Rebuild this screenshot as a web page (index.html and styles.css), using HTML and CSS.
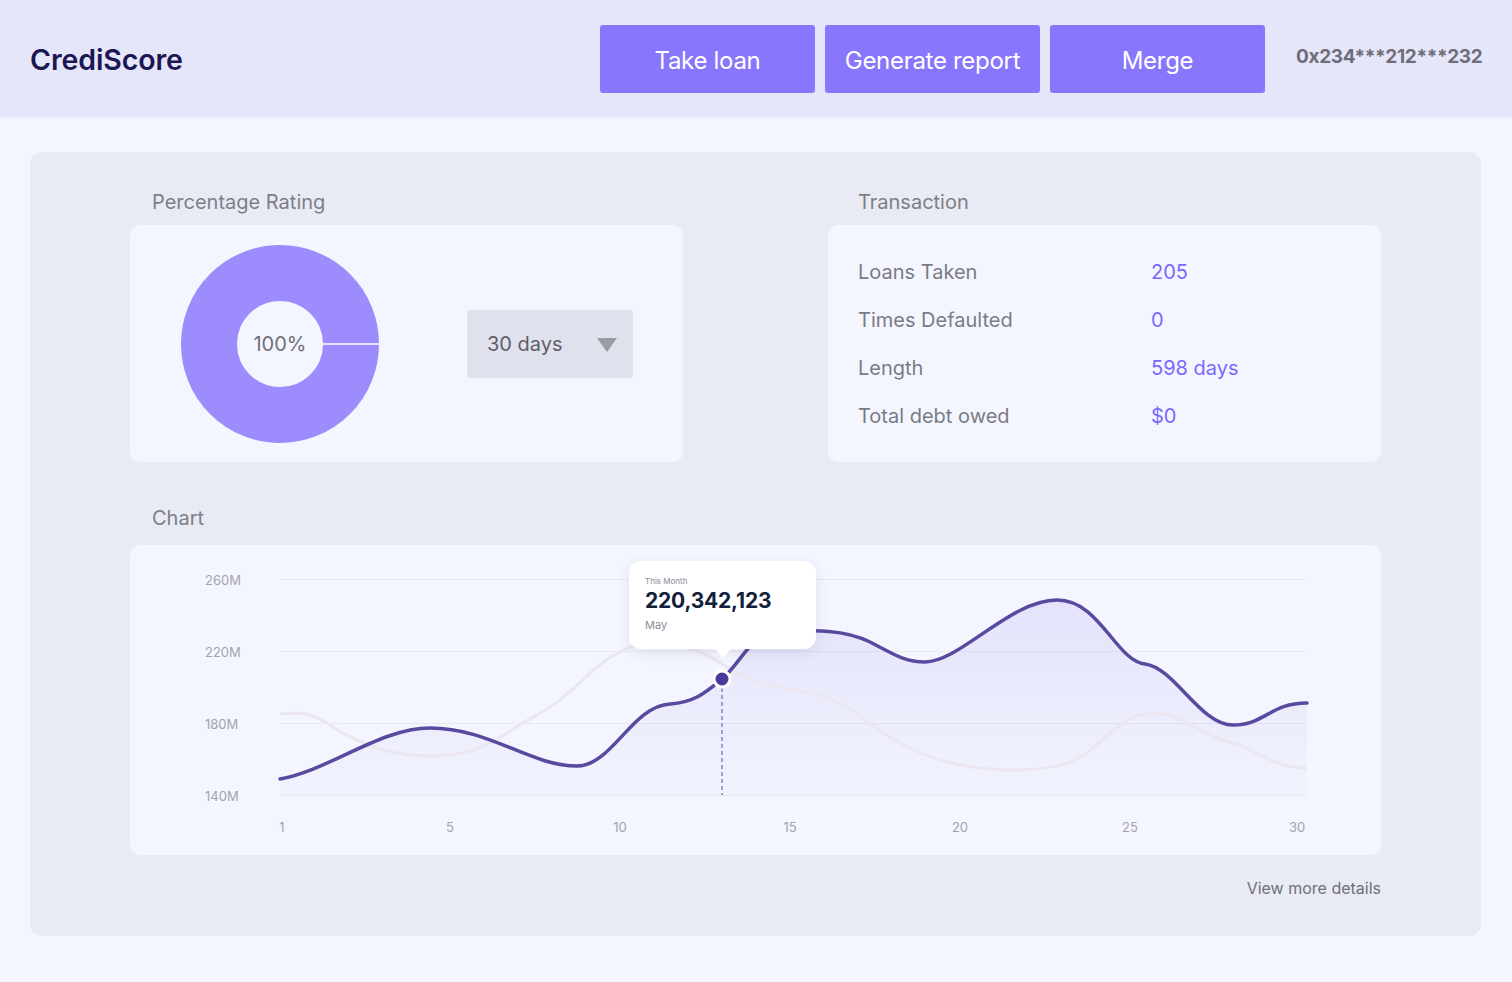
FILE: index.html
```html
<!DOCTYPE html>
<html lang="en">
<head>
<meta charset="utf-8">
<title>CrediScore</title>
<link rel="stylesheet" href="styles.css">
</head>
<body>
<header class="topbar">
  <div class="logo">CrediScore</div>
  <nav class="actions">
    <button class="btn">Take loan</button>
    <button class="btn">Generate report</button>
    <button class="btn">Merge</button>
  </nav>
  <div class="address">0x234***212***232</div>
</header>

<main class="page">
  <section class="panel">
    <div class="top-row">
      <div class="block">
        <h2 class="label">Percentage Rating</h2>
        <div class="card rating-card">
          <svg class="donut" width="198" height="198" viewBox="0 0 198 198">
            <circle cx="99" cy="99" r="71" fill="none" stroke="#9d8cfd" stroke-width="56"/>
            <line x1="142" y1="99" x2="199" y2="99" stroke="#ffffff" stroke-width="1.5"/>
            <text x="99" y="106" text-anchor="middle" class="donut-text">100%</text>
          </svg>
          <div class="select">
            <span>30 days</span>
            <svg width="20" height="14" viewBox="0 0 20 14"><polygon points="0,0 20,0 10,14" fill="#9c9ca5"/></svg>
          </div>
        </div>
      </div>
      <div class="block">
        <h2 class="label label-tx">Transaction</h2>
        <div class="card tx-card">
          <div class="tx-row"><span class="tx-key">Loans Taken</span><span class="tx-val">205</span></div>
          <div class="tx-row"><span class="tx-key">Times Defaulted</span><span class="tx-val">0</span></div>
          <div class="tx-row"><span class="tx-key">Length</span><span class="tx-val">598 days</span></div>
          <div class="tx-row"><span class="tx-key">Total debt owed</span><span class="tx-val">$0</span></div>
        </div>
      </div>
    </div>

    <h2 class="label chart-label">Chart</h2>
    <div class="card chart-card">
      <svg class="chart" width="1251" height="310" viewBox="130 545 1251 310">
        <defs>
          <linearGradient id="fillGrad" gradientUnits="userSpaceOnUse" x1="0" y1="600" x2="0" y2="795">
            <stop offset="0" stop-color="#7b64e6" stop-opacity="0.13"/>
            <stop offset="1" stop-color="#7b64e6" stop-opacity="0.02"/>
          </linearGradient>
        </defs>
        <g stroke="#e9e9f1" stroke-width="1">
          <line x1="280" y1="579.5" x2="1307" y2="579.5"/>
          <line x1="280" y1="651.5" x2="1307" y2="651.5"/>
          <line x1="280" y1="723.5" x2="1307" y2="723.5"/>
          <line x1="280" y1="795.5" x2="1307" y2="795.5"/>
        </g>
        <g class="axis-y">
          <text x="205" y="585">260M</text>
          <text x="205" y="657">220M</text>
          <text x="205" y="729">180M</text>
          <text x="205" y="801">140M</text>
        </g>
        <g class="axis-x" text-anchor="middle">
          <text x="282" y="832">1</text>
          <text x="450" y="832">5</text>
          <text x="620" y="832">10</text>
          <text x="790" y="832">15</text>
          <text x="960" y="832">20</text>
          <text x="1130" y="832">25</text>
          <text x="1297" y="832">30</text>
        </g>
        <path fill="url(#fillGrad)" d="M280,779 C330,770 380,728 430,728 C490,728 530,766 577,766 C612,766 632,706 670,704 C695,702 705,693 722,679 C740,664 752,633 775,632 C805,631 840,627 870,642 C895,655 905,662 925,662 C960,662 1010,600 1057,600 C1100,600 1115,660 1145,664 C1175,668 1200,725 1233,725 C1265,725 1270,703 1307,703 L1307,795 L280,795 Z"/>
        <path fill="none" stroke="#ebe6ef" stroke-width="3" d="M280,714 C300,712 310,712 330,725 C360,745 395,756 430,756 C465,756 485,748 515,728 C535,715 545,712 560,700 C590,675 610,650 640,645 C660,642 680,645 700,652 C720,660 740,680 780,687 C810,692 830,695 855,712 C890,740 930,768 1007,770 C1040,770 1065,768 1087,753 C1110,735 1125,713 1153,713 C1180,713 1200,735 1233,743 C1260,752 1275,768 1307,768"/>
        <path fill="none" stroke="#5a4a9f" stroke-width="3.5" stroke-linecap="round" d="M280,779 C330,770 380,728 430,728 C490,728 530,766 577,766 C612,766 632,706 670,704 C695,702 705,693 722,679 C740,664 752,633 775,632 C805,631 840,627 870,642 C895,655 905,662 925,662 C960,662 1010,600 1057,600 C1100,600 1115,660 1145,664 C1175,668 1200,725 1233,725 C1265,725 1270,703 1307,703"/>
        <line x1="722" y1="688" x2="722" y2="795" stroke="#5b4aa8" stroke-width="1" stroke-dasharray="4 3"/>
        <circle cx="722" cy="679" r="8" fill="#4b3a99" stroke="#ffffff" stroke-width="3"/>
      </svg>
      <div class="tooltip">
        <div class="tt-title">This Month</div>
        <div class="tt-value">220,342,123</div>
        <div class="tt-sub">May</div>
      </div>
    </div>
    <div class="more-row"><a class="more">View more details</a></div>
  </section>
</main>
</body>
</html>
```

FILE: styles.css
```css
* { box-sizing: border-box; }
html, body { margin: 0; padding: 0; }
body {
  background: #f3f6fe;
  font-family: Inter, "Noto Sans", sans-serif;
  color: #7d7d87;
}
.topbar {
  height: 118px;
  background: #e6e6fa;
  display: flex;
  align-items: center;
  padding: 0 30px;
  border-bottom: 1px solid #eceefb;
}
.logo {
  font-size: 28.5px;
  font-weight: 600;
  color: #1b1752;
  letter-spacing: -0.1px;
  margin-top: 2px;
}
.actions {
  margin-left: auto;
  display: flex;
  gap: 10px;
}
.btn {
  width: 215px;
  height: 68px;
  border: none;
  border-radius: 3px;
  background: #8876fd;
  color: #ffffff;
  font-family: Inter, sans-serif;
  font-size: 24px;
  font-weight: 400;
  letter-spacing: -0.3px;
  padding: 3px 0 0 0;
}
.address {
  margin-left: 31px;
  width: 186px;
  flex: none;
  white-space: nowrap;
  font-size: 19px;
  font-weight: 700;
  color: #6e6d78;
  letter-spacing: -0.35px;
  margin-bottom: 4px;
}
.page {
  padding: 34px 31px 46px 30px;
}
.panel {
  background: #e8ebf4;
  border-radius: 12px;
  padding: 36px 100px 38px 100px;
}
.top-row {
  display: grid;
  grid-template-columns: 553px 553px;
  column-gap: 145px;
}
.label {
  margin: 0 0 9px 22px;
  font-size: 20px;
  line-height: 28px;
  font-weight: 400;
  color: #7e7e88;
}
.label-tx { margin-left: 30px; }
.card {
  background: #f3f6fe;
  border-radius: 10px;
}
.rating-card {
  height: 237px;
  display: flex;
  align-items: center;
  padding-left: 51px;
}
.donut { display: block; flex: none; }
.donut-text {
  font-family: Inter, sans-serif;
  font-size: 20px;
  fill: #6f6f78;
}
.select {
  margin-left: 88px;
  width: 166px;
  height: 68px;
  background: #dfe1ec;
  border-radius: 3px;
  display: flex;
  align-items: center;
  justify-content: space-between;
  padding: 0 16px 0 20px;
  font-size: 20px;
  color: #5f5f69;
}
.select svg { display: block; margin-top: 2px; }
.tx-card {
  height: 237px;
  padding: 23px 30px 0 30px;
}
.tx-row {
  display: flex;
  height: 48px;
  align-items: center;
  font-size: 20px;
}
.tx-key {
  width: 293px;
  color: #7b7b85;
}
.tx-val {
  color: #7b68fb;
}
.chart-label {
  margin-top: 42px;
  margin-bottom: 13px;
}
.chart-card {
  position: relative;
  height: 310px;
}
.chart { display: block; }
.axis-y text, .axis-x text {
  font-family: Inter, sans-serif;
  font-size: 13px;
  fill: #a3a3ad;
}
.tooltip {
  position: absolute;
  left: 499px;
  top: 16px;
  width: 187px;
  height: 88px;
  background: #ffffff;
  border-radius: 12px;
  box-shadow: 0 4px 14px rgba(60, 60, 110, 0.10);
  padding: 15px 16px 0 16px;
}
.tooltip::after {
  content: "";
  position: absolute;
  left: 86px;
  bottom: -9px;
  width: 0;
  height: 0;
  border-left: 8px solid transparent;
  border-right: 8px solid transparent;
  border-top: 9px solid #ffffff;
}
.tt-title {
  font-size: 8px;
  line-height: 10px;
  color: #8a8a95;
}
.tt-value {
  font-size: 21px;
  line-height: 26px;
  font-weight: 700;
  color: #13203a;
  margin-top: 2px;
  letter-spacing: -0.2px;
}
.tt-sub {
  font-size: 11px;
  line-height: 14px;
  color: #8e8e98;
  margin-top: 4px;
}
.more-row {
  display: flex;
  justify-content: flex-end;
  margin-top: 23px;
}
.more {
  font-size: 16px;
  color: #6f6f7a;
  line-height: 20px;
}
```
